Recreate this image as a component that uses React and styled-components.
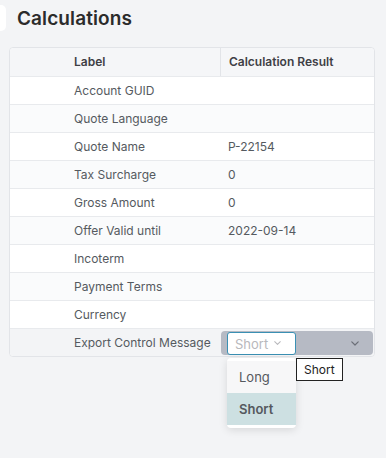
import styled, { createGlobalStyle } from "styled-components";

const GlobalStyle = createGlobalStyle`
  html, body {
    margin: 0;
    padding: 0;
    background: #f3f4f6;
    font-family: Inter, "Noto Sans", Arial, sans-serif;
  }
`;

const Page = styled.div`
  width: 386px;
  min-height: 458px;
  padding-top: 5px;
  box-sizing: border-box;
`;

const Header = styled.div`
  display: flex;
  align-items: center;
  gap: 11px;
  height: 26px;
`;

const SideTab = styled.div`
  width: 6px;
  height: 26px;
  background: #ffffff;
  border-radius: 0 5px 5px 0;
`;

const Title = styled.h1`
  margin: 0;
  font-size: 19px;
  font-weight: 600;
  color: #2b2b2b;
  letter-spacing: 0.1px;
`;

const Table = styled.div`
  margin: 16px 11px 0 9px;
  border: 1px solid #e2e4e8;
  border-radius: 4px;
  background: #ffffff;
`;

const Row = styled.div`
  display: grid;
  grid-template-columns: 56px 154px 1fr;
  height: ${(p) => (p.$head ? "28px" : "28px")};
  box-sizing: border-box;
  border-top: ${(p) => (p.$first ? "none" : "1px solid #e8eaed")};
  background: ${(p) =>
    p.$head ? "#f5f6f8" : p.$active ? "#f3f4f6" : p.$alt ? "#fafbfc" : "#ffffff"};
  border-radius: ${(p) => (p.$first ? "4px 4px 0 0" : p.$last ? "0 0 4px 4px" : "0")};
`;

const Cell = styled.div`
  display: flex;
  align-items: center;
  padding: 0 8px 1px;
  font-size: 12px;
  color: ${(p) => (p.$head ? "#3f3f46" : "#555a60")};
  font-weight: ${(p) => (p.$head ? 600 : 400)};
  border-left: ${(p) => (p.$divider ? "1px solid #e2e4e8" : "none")};
  white-space: nowrap;
`;

const SelectCell = styled.div`
  display: flex;
  align-items: center;
  padding: 0 1px;
`;

const SelectBar = styled.div`
  position: relative;
  flex: 1;
  height: 24px;
  background: #b6bac4;
  border-radius: 4px;
  display: flex;
  align-items: flex-start;
  padding-left: 6px;
  margin-top: 1px;
`;

const SelectBox = styled.div`
  position: relative;
  width: 69px;
  height: 23px;
  box-sizing: border-box;
  margin-top: 1px;
  background: #ffffff;
  border: 1px solid #3a90b4;
  border-radius: 3px;
  display: flex;
  align-items: center;
  padding-left: 7px;
  gap: 6px;
  font-size: 13px;
  color: #b8b8bc;
`;

const BarChevron = styled.div`
  position: absolute;
  right: 14px;
  top: 10px;
  display: flex;
`;

const Menu = styled.div`
  position: absolute;
  top: 25px;
  left: -1px;
  width: 69px;
  padding: 3px 0;
  background: #ffffff;
  border-radius: 4px;
  box-shadow: 0 2px 8px rgba(0, 0, 0, 0.12);
  z-index: 2;
`;

const Option = styled.div`
  height: 32px;
  display: flex;
  align-items: center;
  padding-left: 12px;
  font-size: 13px;
  font-weight: ${(p) => (p.$selected ? 600 : 400)};
  color: #55595e;
  background: ${(p) => (p.$selected ? "#cde0e2" : "#f7f7f8")};
`;

const Tooltip = styled.div`
  position: absolute;
  top: 25px;
  left: 68px;
  height: 23px;
  padding: 0 7px;
  box-sizing: border-box;
  display: flex;
  align-items: center;
  background: #ffffff;
  border: 1px solid #222;
  font-size: 12px;
  color: #222;
  z-index: 3;
  white-space: nowrap;
`;

function Chevron({ color, size = 8 }) {
  return (
    <svg width={size} height={size * 0.6} viewBox="0 0 10 6" fill="none">
      <path d="M1 1l4 4 4-4" stroke={color} strokeWidth="1.5" strokeLinecap="round" strokeLinejoin="round" />
    </svg>
  );
}

const rows = [
  ["Account GUID", ""],
  ["Quote Language", ""],
  ["Quote Name", "P-22154"],
  ["Tax Surcharge", "0"],
  ["Gross Amount", "0"],
  ["Offer Valid until", "2022-09-14"],
  ["Incoterm", ""],
  ["Payment Terms", ""],
  ["Currency", ""],
];

export default function App() {
  return (
    <Page>
      <GlobalStyle />
      <Header>
        <SideTab />
        <Title>Calculations</Title>
      </Header>
      <Table>
        <Row $head $first>
          <Cell $head />
          <Cell $head>Label</Cell>
          <Cell $head $divider>Calculation Result</Cell>
        </Row>
        {rows.map(([label, value], i) => (
          <Row key={label} $alt={i % 2 === 1}>
            <Cell />
            <Cell>{label}</Cell>
            <Cell>{value}</Cell>
          </Row>
        ))}
        <Row $active $last>
          <Cell />
          <Cell>Export Control Message</Cell>
          <SelectCell>
            <SelectBar>
              <SelectBox>
                Short
                <Chevron color="#b8b8bc" size={7} />
                <Menu>
                  <Option>Long</Option>
                  <Option $selected>Short</Option>
                </Menu>
                <Tooltip>Short</Tooltip>
              </SelectBox>
              <BarChevron>
                <Chevron color="#6b6f78" size={8} />
              </BarChevron>
            </SelectBar>
          </SelectCell>
        </Row>
      </Table>
    </Page>
  );
}
